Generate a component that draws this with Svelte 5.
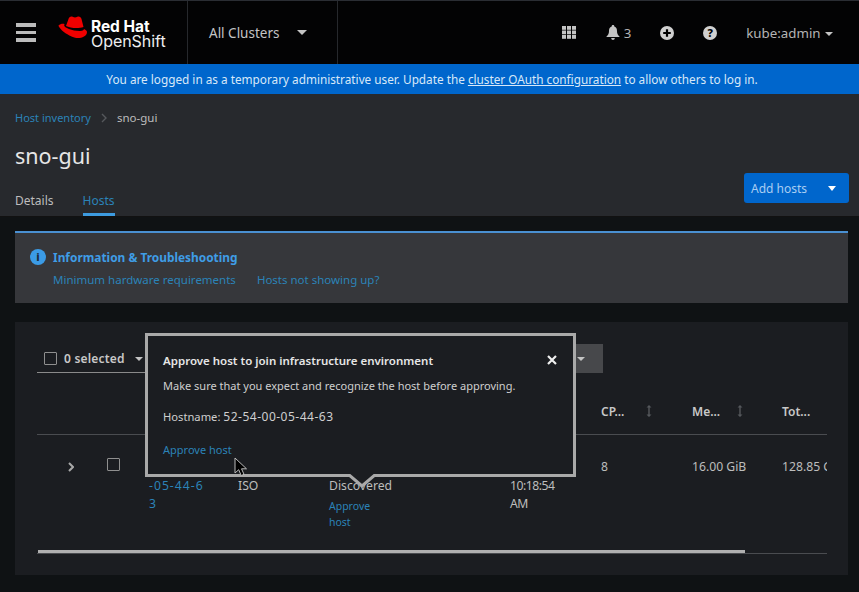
<script>
  const columns = [
    { label: 'CP...', sortable: true },
    { label: 'Me...', sortable: true },
    { label: 'Tot...', sortable: false }
  ];
</script>

<div class="page">
  <header class="masthead">
    <button class="burger" aria-label="Menu"><span></span><span></span><span></span></button>
    <div class="brand">
      <svg class="hat" viewBox="0 0 30 23" width="30" height="23" aria-hidden="true">
        <path d="M8 10 10.5 3C11 1 13 0 15 1c1.500.6 2.500.6 4 0 2-1 4 0 4.500 2L25.500 11C20 13 12 12 8 10Z" fill="#e00" />
        <path d="M.5 9.500C2 8 4.500 7.500 6.500 8L6.200 9.500C6 11.500 14 15 22 15c3 0 4-1.500 4-2 2 1 3 2 3 3 0 4-5 6-9 6C13 22 1.500 14 .5 9.500Z" fill="#e00" />
      </svg>
      <div class="wordmark"><b>Red Hat</b><span>OpenShift</span></div>
    </div>
    <div class="clusters">All Clusters <i class="caret"></i></div>
    <div class="tools">
      <svg class="tool-grid" viewBox="0 0 15 13" width="15" height="13" aria-hidden="true">
        {#each [0, 5, 10] as x}
          {#each [0, 4.5, 9] as y}
            <rect {x} {y} width="4" height="3.800" fill="#c4c4c4" />
          {/each}
        {/each}
      </svg>
      <span class="bell">
        <svg viewBox="0 0 14 15" width="14" height="15" aria-hidden="true">
          <path d="M7 0C8 0 8.400.7 8.300 1.400 10.500 2 11 4 11 6c0 2.500.8 4 2.800 6H.2C2.200 10 3 8.500 3 6c0-2 .5-4 2.700-4.600C5.600.7 6 0 7 0ZM5.200 13h3.600C8.800 14.300 8 15 7 15s-1.800-.7-1.800-2Z" fill="#c4c4c4" />
        </svg>
        3
      </span>
      <svg viewBox="0 0 14 14" width="14" height="14" aria-hidden="true">
        <circle cx="7" cy="7" r="7" fill="#d0d0d0" />
        <path d="M7 3.200v7.600M3.200 7h7.600" stroke="#000" stroke-width="2.200" />
      </svg>
      <span class="help" aria-hidden="true">?</span>
      <span class="user">kube:admin <i class="caret small"></i></span>
    </div>
  </header>

  <div class="banner">
    <span>You are logged in as a temporary administrative user. Update the <u>cluster OAuth configuration</u> to allow others to log in.</span>
  </div>

  <section class="page-head">
    <div>
      <nav class="crumbs">
        <a href="#top">Host inventory</a>
        <svg viewBox="0 0 6 10" width="6" height="10" aria-hidden="true"><path d="M1 1l4 4-4 4" fill="none" stroke="#55585c" stroke-width="1.400" /></svg>
        <span>sno-gui</span>
      </nav>
      <h1>sno-gui</h1>
      <div class="tabs">
        <span>Details</span>
        <span class="active">Hosts</span>
      </div>
    </div>
    <button class="add">Add hosts <i class="caret white"></i></button>
  </section>

  <main class="content">
    <section class="alert">
      <div class="alert-title">
        <span class="info" aria-hidden="true">i</span>
        Information &amp; Troubleshooting
      </div>
      <div class="alert-links">
        <a href="#top">Minimum hardware requirements</a>
        <a href="#top">Hosts not showing up?</a>
      </div>
    </section>

    <section class="card">
      <div class="inner">
        <div class="toolbar">
          <div class="bulk">
            <i class="check"></i>
            <b>0 selected</b>
            <i class="caret small"></i>
          </div>
          <div class="action"><i class="caret small"></i></div>
        </div>

        <div class="table">
          <div class="head">
            {#each columns as col}
              <div class="th">
                <span>{col.label}</span>
                {#if col.sortable}
                  <svg viewBox="0 0 6 12" width="6" height="12" aria-hidden="true">
                    <path d="M3 0 5.500 2.500H.5ZM3 12 .5 9.500h5ZM2.300 2h1.400v8H2.300Z" fill="#55585c" />
                  </svg>
                {/if}
              </div>
            {/each}
          </div>
          <div class="row">
            <div>
              <svg viewBox="0 0 6 10" width="6" height="10" aria-hidden="true"><path d="M1 1l4 4-4 4" fill="none" stroke="#a8a8a8" stroke-width="2" /></svg>
            </div>
            <div><i class="check"></i></div>
            <div class="cell link">52-54-00<br />-05-44-6<br />3</div>
            <div class="cell">Discovery<br />ISO</div>
            <div class="cell">Host<br />Discovered
              <a class="approve" href="#top">Approve<br />host</a>
            </div>
            <div class="cell time">3/1/2023,<br />10:18:54<br />AM</div>
            <div class="cell">8</div>
            <div class="cell">16.00 GiB</div>
            <div class="cell nowrap">128.85 GB</div>
          </div>
        </div>

        <div class="scroll"><span></span></div>
      </div>
    </section>
  </main>

  <aside class="popover">
    <button class="close" aria-label="Close">
      <svg viewBox="0 0 10 10" width="10" height="10" aria-hidden="true"><path d="M1 1l8 8M9 1 1 9" stroke="#f0f0f0" stroke-width="2.200" /></svg>
    </button>
    <h2>Approve host to join infrastructure environment</h2>
    <p>Make sure that you expect and recognize the host before approving.</p>
    <p class="hostname">Hostname: <span>52-54-00-05-44-63</span></p>
    <a href="#top">Approve host</a>
    <svg class="arrow" viewBox="0 0 30 14" width="30" height="14" aria-hidden="true">
      <path d="M1 0 15 12 29 0Z" fill="#1b1d21" />
      <path d="M1 0 15 12 29 0" fill="none" stroke="#a9a9a9" stroke-width="3" />
    </svg>
  </aside>

  <svg class="pointer" viewBox="0 0 14 20" width="14" height="20" aria-hidden="true">
    <path d="M1 1v15l3.700-3.300 2.500 5.800 2.800-1.200-2.500-5.500H12.500Z" fill="#000" stroke="#bbb" stroke-width="1" />
  </svg>
</div>

<style>
  :global(body) {
    margin: 0;
    background: #0f1214;
    font-family: "Noto Sans", "Open Sans", sans-serif;
    overflow: hidden;
  }

  .page {
    position: relative;
    width: 859px;
    height: 592px;
    overflow: hidden;
    font-size: 12px;
    color: #d2d2d2;
  }

  a {
    color: #2b83b8;
    text-decoration: none;
  }

  i {
    font-style: normal;
    display: inline-block;
  }

  button {
    font: inherit;
    border: 0;
    background: none;
    padding: 0;
  }

  .caret {
    width: 0;
    height: 0;
    border-left: 5px solid transparent;
    border-right: 5px solid transparent;
    border-top: 5px solid #c4c4c4;
    vertical-align: 2px;
  }

  .caret.small {
    border-left-width: 4.500px;
    border-right-width: 4.500px;
    border-top-width: 4.500px;
  }

  .caret.white {
    border-top-color: #fff;
  }

  .masthead {
    height: 63px;
    border-top: 1px solid #2a2d33;
    background: #030304;
    display: flex;
    align-items: center;
  }

  .burger {
    display: flex;
    flex-direction: column;
    gap: 4px;
    width: 20px;
    margin-left: 16px;
  }

  .burger span {
    height: 3.500px;
    background: #bcbcbc;
  }

  .brand {
    display: flex;
    align-items: center;
    gap: 3px;
    width: 129px;
    margin-left: 22px;
  }

  .hat {
    margin-top: -10px;
  }

  .wordmark {
    display: flex;
    flex-direction: column;
    font-size: 16px;
    line-height: 15.500px;
    padding-top: 3px;
    color: #eee;
    font-family: Inter, sans-serif;
    letter-spacing: -0.05px;
  }

  .wordmark b {
    color: #fff;
    font-weight: 700;
    font-size: 15.500px;
  }

  .clusters {
    align-self: stretch;
    width: 151px;
    box-sizing: border-box;
    border-left: 1px solid #26282c;
    border-right: 1px solid #26282c;
    padding-left: 21px;
    display: flex;
    align-items: center;
    font-size: 13.500px;
    color: #c4c4c4;
  }

  .clusters .caret {
    margin-left: 18px;
    vertical-align: 0;
  }

  .tools {
    margin-left: auto;
    margin-right: 26px;
    display: flex;
    align-items: center;
    gap: 29px;
    color: #b4b4b4;
    font-size: 13.300px;
  }

  .bell {
    display: flex;
    align-items: center;
    gap: 4px;
  }

  .help {
    width: 14px;
    height: 14px;
    border-radius: 50%;
    background: #d0d0d0;
    color: #000;
    font-weight: 800;
    font-size: 11px;
    line-height: 14px;
    text-align: center;
  }

  .user .caret {
    margin-left: 1px;
  }

  .banner {
    height: 30px;
    background: #0066cc;
    color: #d8e8f8;
    display: flex;
    align-items: center;
    justify-content: center;
    font-size: 11.770px;
    padding-left: 5px;
    box-sizing: border-box;
  }

  .page-head {
    height: 123px;
    box-sizing: border-box;
    background: #27292d;
    border-bottom: 1px solid #111;
    padding: 14px 10px 14px 15px;
    display: flex;
    justify-content: space-between;
    align-items: flex-end;
  }

  .crumbs {
    display: flex;
    align-items: center;
    gap: 10px;
    font-size: 11px;
    line-height: 20px;
    height: 20px;
  }

  .crumbs span {
    color: #bdbdbd;
    font-size: 11.500px;
  }

  h1 {
    margin: 13px 0 0;
    font-size: 21.500px;
    font-weight: 400;
    line-height: 30px;
    color: #e6e6e6;
  }

  .tabs {
    display: flex;
    gap: 29px;
    margin-top: 21px;
    margin-bottom: -14px;
    font-size: 12px;
    color: #bdbdbd;
  }

  .tabs span {
    padding-bottom: 3px;
    line-height: 18px;
    border-bottom: 3px solid transparent;
  }

  .tabs .active {
    color: #2b83b8;
    border-bottom-color: #3d9be0;
  }

  .add {
    width: 105px;
    height: 30px;
    background: #0066cc;
    border-radius: 3px;
    color: #a9cdf2;
    font-size: 12px;
    display: flex;
    align-items: center;
    padding-left: 7px;
    gap: 21px;
    box-sizing: border-box;
    margin-bottom: -1px;
  }

  .add .caret {
    vertical-align: 0;
    border-left-width: 4.500px;
    border-right-width: 4.500px;
  }

  .content {
    padding: 14px 11px 0 15px;
    display: flex;
    flex-direction: column;
    gap: 19px;
  }

  .alert {
    height: 72px;
    box-sizing: border-box;
    background: #36373b;
    border-top: 2px solid #4a90d2;
    padding: 14px 0 0 15px;
  }

  .alert-title {
    display: flex;
    align-items: center;
    gap: 7px;
    color: #3f9de6;
    font-weight: 700;
    font-size: 11.900px;
    line-height: 20px;
  }

  .info {
    width: 16px;
    height: 16px;
    border-radius: 50%;
    background: #3b9be6;
    color: #1a2a3a;
    text-align: center;
    font-size: 11px;
    line-height: 16px;
    font-weight: 800;
  }

  .alert-links {
    display: flex;
    gap: 21px;
    margin: 4px 0 0 23px;
    font-size: 11.500px;
    line-height: 18px;
  }

  .card {
    height: 253px;
    box-sizing: border-box;
    background: #1b1d21;
    padding: 22px 21px 0 22px;
  }

  .inner {
    overflow: hidden;
  }

  .toolbar {
    display: flex;
    justify-content: space-between;
    align-items: flex-start;
    width: 566px;
    height: 29px;
  }

  .bulk {
    width: 108px;
    height: 27px;
    padding-top: 1px;
    border-bottom: 1px solid #8a8a8a;
    display: flex;
    align-items: center;
    padding-left: 7px;
    margin-right: -7px;
    font-size: 12px;
  }

  .bulk b {
    margin-left: 7px;
    font-weight: 600;
    color: #c8c8c8;
    letter-spacing: 0.2px;
  }

  .bulk .caret {
    margin-left: 10px;
    vertical-align: 0;
  }

  .check {
    width: 11px;
    height: 11px;
    border: 1.500px solid #8f8f8f;
    border-radius: 1px;
    flex: none;
  }

  .action {
    width: 28px;
    height: 29px;
    background: #47484b;
    display: flex;
    align-items: center;
    padding-left: 2px;
    box-sizing: border-box;
  }

  .head,
  .row {
    display: grid;
    grid-template-columns: 56px 56px 89px 91px 181px 91px 91px 90px 45px;
  }

  .table {
    width: 790px;
    overflow: hidden;
  }

  .head {
    height: 62px;
    box-sizing: border-box;
    border-bottom: 1px solid #4a4c50;
    grid-template-columns: 564px 91px 90px 45px;
    align-items: center;
    padding-top: 15px;
  }

  .head::before {
    content: "";
  }

  .th {
    display: flex;
    align-items: center;
    font-weight: 600;
    font-size: 12px;
    color: #c8c8c8;
  }

  .th span {
    width: 45px;
  }

  .row {
    height: 115px;
    padding-top: 23px;
    box-sizing: border-box;
    width: 830px;
  }

  .row > div:first-child {
    padding: 1px 0 0 31px;
  }

  .row > div:nth-child(2) {
    padding: 0 0 0 14px;
  }

  .cell {
    font-size: 12.200px;
    line-height: 18.500px;
    color: #bdbdbd;
  }

  .cell.link {
    color: #2b83b8;
    letter-spacing: 1px;
  }

  .cell.time {
    letter-spacing: -0.5px;
  }

  .nowrap {
    white-space: nowrap;
  }

  .approve {
    display: block;
    margin-top: 2.500px;
    font-size: 10.500px;
    line-height: 16px;
  }

  .scroll {
    height: 4px;
    width: 790px;
    border-bottom: 1px solid #4a4c50;
    box-sizing: border-box;
  }

  .scroll span {
    display: block;
    margin-left: 1px;
    height: 3px;
    width: 707px;
    background: #b0b0b0;
  }

  /* popover floats over the table */
  .popover {
    position: absolute;
    left: 145px;
    top: 333px;
    width: 431px;
    height: 144px;
    box-sizing: border-box;
    border: 3px solid #a9a9a9;
    background: #1b1d21;
    padding: 16px 15px;
    font-size: 11px;
    color: #cfcfcf;
  }

  .popover h2 {
    margin: 0;
    font-size: 11.500px;
    font-weight: 600;
    line-height: 18px;
    color: #e6e6e6;
  }

  .popover p {
    margin: 7px 0 0;
    line-height: 17px;
  }

  .popover .hostname {
    margin-top: 14px;
    font-size: 11.200px;
  }

  .hostname span {
    font-size: 12px;
    letter-spacing: 0.5px;
  }

  .popover a {
    display: block;
    margin-top: 16px;
    line-height: 18px;
  }

  .close {
    position: absolute;
    right: 16px;
    top: 19px;
    display: flex;
  }

  .arrow {
    position: absolute;
    left: 199px;
    top: 138px;
  }

  .pointer {
    position: absolute;
    left: 234px;
    top: 457px;
  }
</style>
